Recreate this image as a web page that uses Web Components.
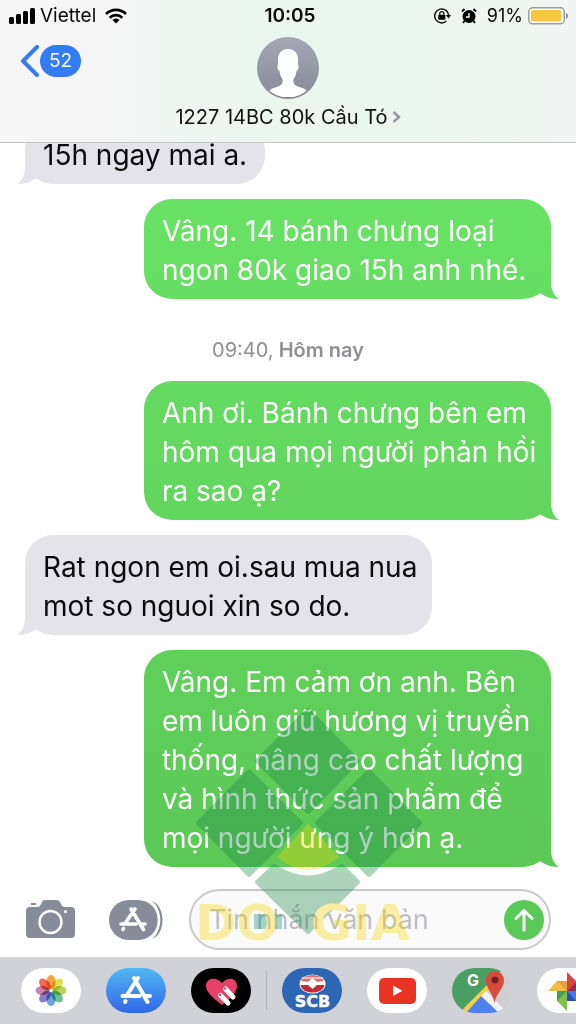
<!DOCTYPE html>
<html lang="vi">
<head>
<meta charset="utf-8">
<meta name="viewport" content="width=device-width, initial-scale=1">
<title>1227 14BC 80k Cầu Tó</title>
<style>
  html, body { margin: 0; height: 100%; background: #fff; }
  body { font-family: Inter, "Noto Sans", sans-serif; color: #0a0a0c; }
</style>
</head>
<body>
<chat-screen>
  <chat-header slot="header" name="1227 14BC 80k Cầu Tó" unread="52"></chat-header>
  <chat-bubble side="in">15h ngay mai a.</chat-bubble>
  <chat-bubble side="out" wide>Vâng. 14 bánh chưng loại<br>ngon 80k giao 15h anh nhé.</chat-bubble>
  <time-stamp time="09:40,">Hôm nay</time-stamp>
  <chat-bubble side="out" wide>Anh ơi. Bánh chưng bên em<br>hôm qua mọi người phản hồi<br>ra sao ạ?</chat-bubble>
  <chat-bubble side="in" wide>Rat ngon em oi.sau mua nua<br>mot so nguoi xin so do.</chat-bubble>
  <chat-bubble side="out" wide>Vâng. Em cảm ơn anh. Bên<br>em luôn giữ hương vị truyền<br>thống, nâng cao chất lượng<br>và hình thức sản phẩm để<br>mọi người ưng ý hơn ạ.</chat-bubble>
  <message-composer slot="composer"></message-composer>
  <app-strip slot="apps"></app-strip>
  <brand-watermark slot="overlay"></brand-watermark>
</chat-screen>

<script>
const define = (name, html, setup) => {
  const template = document.createElement('template');
  template.innerHTML = html;
  customElements.define(name, class extends HTMLElement {
    constructor() {
      super();
      this.attachShadow({ mode: 'open' }).append(template.content.cloneNode(true));
    }
    connectedCallback() { if (setup) setup(this, this.shadowRoot); }
  });
};

define('chat-screen', `
  <style>
    :host { position: relative; display: flex; flex-direction: column; height: 100vh; overflow: hidden; }
    main { flex: 1; min-height: 0; display: flex; flex-direction: column; justify-content: flex-end; gap: 15px; padding: 0 25px 22px; overflow: hidden; }
  </style>
  <slot name="header"></slot>
  <main><slot></slot></main>
  <slot name="composer"></slot>
  <slot name="apps"></slot>
  <slot name="overlay"></slot>`);

define('status-bar', `
  <style>
    :host { display: grid; grid-template-columns: 1fr auto 1fr; align-items: center; height: 32px; padding: 0 7px 0 8px; font-size: 18px; line-height: 24px; }
    div { display: flex; align-items: center; }
    .end { justify-content: flex-end; }
    .signal { margin-right: 5px; }
    .carrier { font-size: 19px; }
    .wifi { margin-left: 9px; }
    .alarm { margin: 0 10px; }
    .battery { margin-left: 5px; }
    strong { font-weight: 600; font-size: 19px; padding-left: 3px; }
    svg { display: block; flex: none; }
  </style>
  <div>
    <svg class="signal" width="27" height="16" viewBox="0 0 27 16"><rect x="1" y="9" width="5" height="7" rx="1.5"/><rect x="8" y="6" width="5" height="10" rx="1.5"/><rect x="15" y="3" width="5" height="13" rx="1.5"/><rect x="22" y="0" width="5" height="16" rx="1.5"/></svg>
    <span class="carrier">Viettel</span>
    <svg class="wifi" width="22" height="16" viewBox="0 0 22 16"><g fill="none" stroke="#000" stroke-width="2.8"><path d="M1 6C6.500.5 15.500.5 21 6"/><path d="M4.700 9.700C8.200 6.200 13.800 6.200 17.300 9.700"/></g><path d="M7.500 12C9.500 10 12.500 10 14.500 12L11 15.500Z"/></svg>
  </div>
  <strong>10:05</strong>
  <div class="end">
    <svg width="17" height="16" viewBox="0 0 17 16"><path d="M12.500 13A7 7 0 1 1 14.700 8" fill="none" stroke="#111" stroke-width="1.500"/><path d="M12 7H17L14.500 10.500Z"/><rect x="4.300" y="6.800" width="7" height="5" rx=".8"/><path d="M5.700 7V5.700a2.100 2.100 0 0 1 4.200 0V7" fill="none" stroke="#111" stroke-width="1.200"/></svg>
    <svg class="alarm" width="16" height="16" viewBox="0 0 16 16"><circle cx="8" cy="8.500" r="6.500"/><path d="M1 3.500L3.500 1M15 3.500L12.500 1M3.500 13L2 15M12.500 13L14 15" stroke="#000" stroke-width="1.800"/><path d="M8 5V9H5" fill="none" stroke="#fff" stroke-width="1.300"/></svg>
    <span>91%</span>
    <svg class="battery" width="41" height="18" viewBox="0 0 41 18"><rect x=".8" y=".8" width="35.500" height="16" rx="4" fill="#fff" stroke="#999d9c" stroke-width="1.500"/><rect x="3" y="3" width="30" height="11.600" rx="1.500" fill="#f7c63e"/><path d="M38 6Q40 7 40 9T38 12Z" fill="#8b8f8e"/></svg>
  </div>`);

define('chat-header', `
  <style>
    :host { display: block; flex: none; box-sizing: border-box; height: 143px; border-bottom: 1px solid #c4c6c6;
      background: linear-gradient(90deg, #f6f6f7 20%, #ebf7ee 42%, #ebf7ee 76%, #f2f5f4 100%); }
    nav { display: grid; grid-template-columns: 1fr auto 1fr; align-items: start; padding: 5px 20px 0; }
    .back { display: flex; align-items: center; justify-self: start; gap: 1px; padding: 0; margin-top: 8px; border: 0; background: none; font: inherit; }
    .back b { min-width: 41px; box-sizing: border-box; border-radius: 16px; background: #347bf6; color: #fff; font-weight: 400; font-size: 19px; line-height: 32px; text-align: center; }
    .contact { display: flex; flex-direction: column; align-items: center; gap: 6px; padding: 0; border: 0; background: none; font: inherit; font-size: 20px; line-height: 24px; color: #111; white-space: nowrap; }
    .contact span { display: flex; align-items: center; gap: 4px; }
    .name { font-style: normal; }
    svg { display: block; }
  </style>
  <status-bar></status-bar>
  <nav>
    <button class="back" aria-label="Quay lại"><svg width="19" height="32" viewBox="0 0 19 32"><path d="M17 2L3 16L17 30" fill="none" stroke="#347bf6" stroke-width="4" stroke-linecap="round" stroke-linejoin="round"/></svg><b></b></button>
    <button class="contact">
      <svg width="62" height="62" viewBox="0 0 62 62"><defs><linearGradient id="g" x2="0" y2="1"><stop stop-color="#a5a8b4"/><stop offset="1" stop-color="#868a96"/></linearGradient><clipPath id="c"><circle cx="31" cy="31" r="29.500"/></clipPath></defs><circle cx="31" cy="31" r="31" fill="url(#g)"/><path clip-path="url(#c)" fill="#fff" d="M31 12C24 12 20.500 17 21 24C21 26 21 28 20.500 29C20 31 21 33 22.500 34C23 38 24 40 25.500 42C26 46 25 48 21 49.500C15 51.500 10 53 8 60H54C52 53 47 51.500 41 49.500C37 48 36 46 36.500 42C38 40 39 38 39.500 34C41 33 42 31 41.500 29C41 28 41 26 41 24C41.500 17 38 12 31 12Z"/></svg>
      <span><i class="name"></i><svg width="9" height="14" viewBox="0 0 9 14"><path d="M1.500 2L7 7L1.500 12" fill="none" stroke="#9296a0" stroke-width="2.400"/></svg></span>
    </button>
  </nav>`, (host, root) => {
    root.querySelector('b').textContent = host.getAttribute('unread');
    root.querySelector('.name').textContent = host.getAttribute('name');
  });

define('chat-bubble', `
  <style>
    :host { position: relative; isolation: isolate; flex: none; display: block; box-sizing: border-box; padding: 13px 18px 9px; border-radius: 28px; font-size: 28px; line-height: 39px; white-space: nowrap; }
    :host([wide]) { width: 77.4%; }
    :host::after { content: ""; position: absolute; z-index: -1; bottom: 0; width: 30px; height: 30px; background: inherit; background-attachment: inherit;
      clip-path: path("M22 0V12C22 21 25 27 30 30C23 30 17 28 12 25L0 12V0Z"); }
    :host([side="in"]) { align-self: flex-start; background: #e4e3e9; }
    :host([side="in"])::after { left: -8px; transform: scaleX(-1); }
    :host([side="out"]) { align-self: flex-end; color: #fff; background: linear-gradient(#6ce969, #5bc655 90%) fixed; }
    :host([side="out"])::after { right: -8px; }
  </style>
  <slot></slot>`);

define('time-stamp', `
  <style>
    :host { flex: none; display: block; padding: 24px 0 4px; text-align: center; font-size: 20px; line-height: 24px; color: #8f8f94; font-weight: 600; }
    time { font-weight: 400; }
  </style>
  <time></time> <slot></slot>`, (host, root) => { root.querySelector('time').textContent = host.getAttribute('time'); });

define('message-composer', `
  <style>
    :host { display: block; flex: none; padding: 0 25px 7px; }
    form { display: flex; align-items: center; }
    button { flex: none; padding: 0; border: 0; background: none; }
    svg { display: block; }
    .apps { margin: 0 26px 0 33px; }
    .field { flex: 1; min-width: 0; display: flex; align-items: center; box-sizing: border-box; height: 61px; padding: 0 5px 0 18px; border: 2px solid #c9c9ce; border-radius: 31px; background: #fafafa; }
    input { flex: 1; min-width: 0; padding: 0; border: 0; outline: 0; background: none; font: inherit; font-size: 27px; line-height: 36px; }
    input::placeholder { color: #bdbdc3; opacity: 1; }
  </style>
  <form>
    <button type="button" aria-label="Máy ảnh"><svg width="51" height="39" viewBox="0 0 51 39"><path fill="#878c99" d="M5 7H12Q15 7 16 4L17 2Q18 0 20 0H31Q34 0 35 2L36 4Q37 7 40 7H46Q50 7 50 11V34Q50 38 46 38H5Q1 38 1 34V11Q1 7 5 7Z"/><rect x="6" y="3" width="5" height="2" fill="#878c99"/><circle cx="25.500" cy="22" r="11" fill="none" stroke="#fff" stroke-width="2.400"/><circle cx="40.500" cy="11.500" r="1.500" fill="#fff"/></svg></button>
    <button class="apps" type="button" aria-label="Ứng dụng"><svg width="54" height="40" viewBox="0 0 54 40"><rect x="0" y="0" width="49" height="40" rx="20" fill="#878c99"/><path d="M40 1.500C53.500 7 53.500 33 40 38.500" fill="none" stroke="#fff" stroke-width="2.600"/><path d="M43 1C57 6 57 34 43 39C54 30 54 10 43 1Z" fill="#878c99"/><g fill="none" stroke="#fff" stroke-width="3.600" stroke-linecap="round"><path d="M26 9L16 23.500M22 9L34.500 29.500M12 24H27M33 24H36M14.500 28.500L14 29.500"/></g></svg></button>
    <div class="field">
      <input type="text" aria-label="Tin nhắn văn bản" placeholder="Tin nhắn văn bản">
      <button type="submit" aria-label="Gửi"><svg width="40" height="40" viewBox="0 0 40 40"><circle cx="20" cy="20" r="20" fill="#5bc957"/><path d="M20 30V11M12 18.500L20 10.500L28 18.500" fill="none" stroke="#fff" stroke-width="3" stroke-linecap="round" stroke-linejoin="round"/></svg></button>
    </div>
  </form>`);

define('app-strip', `
  <style>
    :host { flex: none; display: flex; align-items: center; box-sizing: border-box; height: 67px; padding-left: 21px; background: #d1d2d8; overflow: hidden; }
    div { display: flex; gap: 25px; flex: none; }
    hr { flex: none; width: 1px; height: 39px; margin: 0 15px; border: 0; background: #b5b6bd; }
    button { flex: none; padding: 0; border: 0; background: none; width: 60px; height: 45px; border-radius: 23px; overflow: hidden; }
    svg { display: block; }
    ellipse.petal { mix-blend-mode: multiply; }
  </style>
  <div>
    <button aria-label="Ảnh"><svg width="60" height="45" viewBox="0 0 60 45"><rect width="60" height="45" fill="#fff"/><g transform="translate(30 22.500)">
      <ellipse class="petal" cy="-8.500" rx="4.600" ry="7" fill="#f4a64a"/><ellipse class="petal" cy="-8.500" rx="4.600" ry="7" fill="#e6e04a" transform="rotate(45)"/><ellipse class="petal" cy="-8.500" rx="4.600" ry="7" fill="#b0d45e" transform="rotate(90)"/><ellipse class="petal" cy="-8.500" rx="4.600" ry="7" fill="#6cc094" transform="rotate(135)"/><ellipse class="petal" cy="-8.500" rx="4.600" ry="7" fill="#6ca4de" transform="rotate(180)"/><ellipse class="petal" cy="-8.500" rx="4.600" ry="7" fill="#8a7cc0" transform="rotate(225)"/><ellipse class="petal" cy="-8.500" rx="4.600" ry="7" fill="#c884b0" transform="rotate(270)"/><ellipse class="petal" cy="-8.500" rx="4.600" ry="7" fill="#ee6a58" transform="rotate(315)"/></g></svg></button>
    <button aria-label="App Store"><svg width="60" height="45" viewBox="0 0 60 45"><defs><linearGradient id="a" x2="0" y2="1"><stop stop-color="#4fb8f2"/><stop offset="1" stop-color="#3266e8"/></linearGradient></defs><rect width="60" height="45" fill="url(#a)"/><g fill="none" stroke="#fff" stroke-width="4" stroke-linecap="round"><path d="M32 10L21 27M28 10L41.500 34M16.500 28H33.500M39.500 28H44M19.500 33L19 34"/></g></svg></button>
    <button aria-label="Digital Touch"><svg width="60" height="45" viewBox="0 0 60 45"><rect width="60" height="45"/><path d="M31 37C22 30 15 24 15 18C15 10 25 8 31 15C37 8 46 10 46 18C46 24 40 30 31 37Z" fill="#e94067"/><g stroke="#fff" stroke-width="5" stroke-linecap="round"><path d="M34.500 21L42 29M29.500 27.500L37 35"/></g><circle cx="34" cy="20.500" r="1.200" fill="#e94067"/><circle cx="29" cy="27" r="1.200" fill="#e94067"/></svg></button>
  </div>
  <hr>
  <div>
    <button aria-label="SCB"><svg width="60" height="45" viewBox="0 0 60 45"><rect width="60" height="45" fill="#2c66b4"/><ellipse cx="30.500" cy="16" rx="13" ry="9.500" fill="#fff"/><path d="M19 13C22 5 39 5 42 13L35 14L30.500 10L26 14Z" fill="#d77373"/><path d="M18.500 17H26L30.500 21L35 17H42.500C41 27 20 27 18.500 17Z" fill="#b92f35"/><path d="M20 10H41M19 14.500H26M35 14.500H42" stroke="#fff" stroke-width="1"/><text x="30.500" y="39" text-anchor="middle" font-family="DejaVu Sans" font-weight="700" font-size="16" fill="#fff" stroke="#fff" stroke-width=".4">SCB</text></svg></button>
    <button aria-label="YouTube"><svg width="60" height="45" viewBox="0 0 60 45"><rect width="60" height="45" fill="#fff"/><rect x="12" y="10" width="37" height="26" rx="5" fill="#e93323"/><path d="M26 17.500V28L35.500 22.700Z" fill="#fff"/></svg></button>
    <button aria-label="Google Maps"><svg width="60" height="45" viewBox="0 0 60 45"><rect width="60" height="45" fill="#cfcfd2"/><path d="M0 0H52L10 45H0Z" fill="#4a9f62"/><path d="M9 43L37 15L40 20L14 46Z" fill="#f6cf4a"/><path d="M14 45L30 27L48 45Z" fill="#4b80ee"/><path d="M29 28L34 23L54 43L48 46Z" fill="#f1f1f1"/><path d="M42.500 35C41 25 34 21 34 12A9 9 0 0 1 52 12C52 21 44 25 42.500 35Z" fill="#d84a3d"/><circle cx="43" cy="12" r="3.500" fill="#6f211e"/><text x="21" y="18" text-anchor="middle" font-family="Inter" font-weight="700" font-size="16" fill="#fff">G</text></svg></button>
    <button aria-label="Google Photos"><svg width="60" height="45" viewBox="0 0 60 45"><rect width="60" height="45" fill="#fff"/><path d="M30 4L40 14V23H30Z" fill="#d8453b"/><path d="M30 23L40 14V23Z" fill="#962b4f"/><path d="M11 23L20 13H30V23Z" fill="#f3bd42"/><path d="M20 13H30V23Z" fill="#e5a13b"/><path d="M30 23V43L20 33V23Z" fill="#7fc04d"/><path d="M20 23H30L20 33Z" fill="#4b9b57"/><path d="M30 23H49L39 33H30Z" fill="#4b78e4"/><path d="M30 23L39 33H30Z" fill="#2a4fb5"/></svg></button>
  </div>`);

define('brand-watermark', `
  <style>
    :host { position: absolute; left: 50%; bottom: 77px; width: 228px; margin-left: -93px; pointer-events: none; opacity: .35; }
    svg { display: block; }
    p { display: flex; gap: 32px; margin: -36px 0 0; color: #f6d700; font: 700 50px/48px "DejaVu Sans", sans-serif; white-space: nowrap; }
  </style>
  <svg width="228" height="228" viewBox="0 0 228 228"><g fill="#1b8446" stroke="#1b8446" stroke-width="4" stroke-linejoin="round"><path d="M113 3L163 54L113 105L62 54Z"/><path d="M54 64L106 116L54 168L3 116Z"/><path d="M174 64L225 116L174 168L122 116Z"/><path d="M79 159Q113 182 147 159L163 175L113 225L62 175Z"/></g><path d="M113 117L144 150Q113 176 82 150Z" fill="#f2d600"/><path d="M59 207H87V222H59Z" fill="#00907a"/></svg>
  <p><span>DO</span><span>GIA</span></p>`);
</script>
</body>
</html>
